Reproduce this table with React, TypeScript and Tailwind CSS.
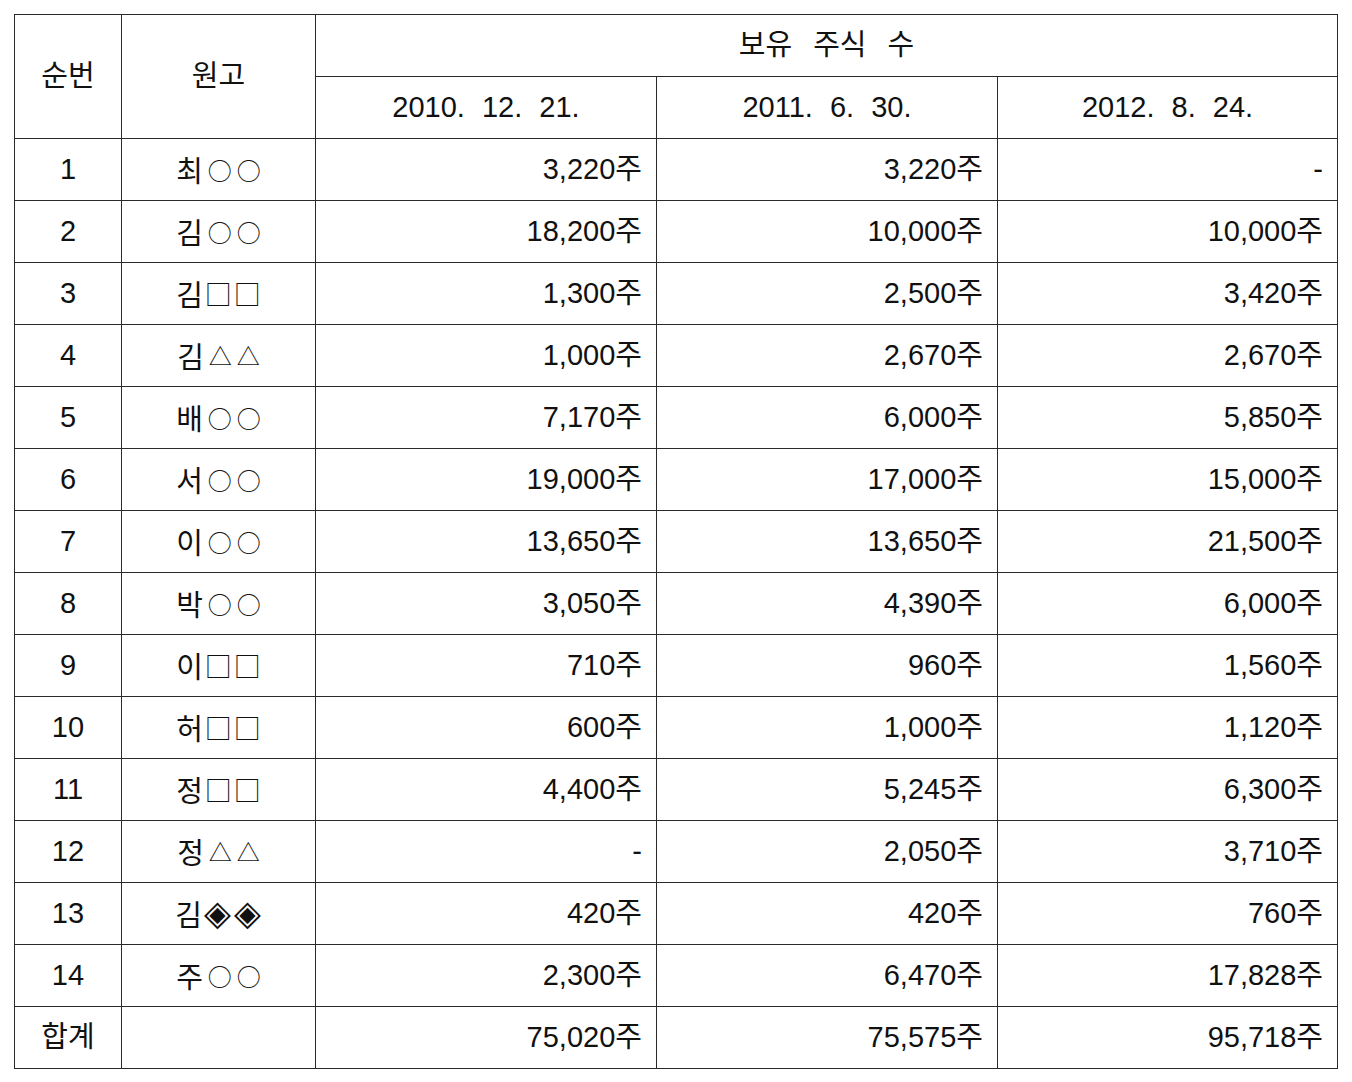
import React from "react";

const rows: [string, string, string, string, string, string][] = [
  ["1", "최", "○○", "3,220주", "3,220주", "-"],
  ["2", "김", "○○", "18,200주", "10,000주", "10,000주"],
  ["3", "김", "□□", "1,300주", "2,500주", "3,420주"],
  ["4", "김", "△△", "1,000주", "2,670주", "2,670주"],
  ["5", "배", "○○", "7,170주", "6,000주", "5,850주"],
  ["6", "서", "○○", "19,000주", "17,000주", "15,000주"],
  ["7", "이", "○○", "13,650주", "13,650주", "21,500주"],
  ["8", "박", "○○", "3,050주", "4,390주", "6,000주"],
  ["9", "이", "□□", "710주", "960주", "1,560주"],
  ["10", "허", "□□", "600주", "1,000주", "1,120주"],
  ["11", "정", "□□", "4,400주", "5,245주", "6,300주"],
  ["12", "정", "△△", "-", "2,050주", "3,710주"],
  ["13", "김", "◈◈", "420주", "420주", "760주"],
  ["14", "주", "○○", "2,300주", "6,470주", "17,828주"],
  ["합계", "", "", "75,020주", "75,575주", "95,718주"],
];

const cell = "border border-[#2a2a2a] h-[62px] p-0 align-middle leading-none";

function Sym({ s }: { s: string }) {
  if (s === "◈") {
    return (
      <span
        className="inline-flex items-center justify-center w-[29px] h-[29px] ml-[1px] text-[35px] leading-none"
        style={{ fontFamily: '"DejaVu Sans", sans-serif' }}
      >
        ◈
      </span>
    );
  }
  if (s === "△") {
    return <span className="inline-block ml-[5px] text-[23px] leading-none">△</span>;
  }
  if (s === "□") {
    return <span className="inline-block ml-[2px] text-[27px] leading-none">□</span>;
  }
  return <span className="inline-block ml-[5px] text-[24px] leading-none">○</span>;
}

export default function App() {
  return (
    <div
      className="bg-white w-[1352px] h-[1082px] pt-[14px] pl-[14px] text-[#111] text-[29px]"
      style={{ fontFamily: '"Liberation Sans", "Noto Sans CJK KR", sans-serif' }}
    >
      <table className="table-fixed border-collapse w-[1323px]">
        <colgroup>
          <col className="w-[107px]" />
          <col className="w-[194px]" />
          <col className="w-[341px]" />
          <col className="w-[341px]" />
          <col className="w-[340px]" />
        </colgroup>
        <tbody>
          <tr>
            <td rowSpan={2} className={cell + " text-center"}>순번</td>
            <td rowSpan={2} className={cell + " text-center"}>원고</td>
            <td colSpan={3} className={cell + " text-center [word-spacing:13px]"}>보유 주식 수</td>
          </tr>
          <tr>
            <td className={cell + " text-center [word-spacing:9px]"}>2010. 12. 21.</td>
            <td className={cell + " text-center [word-spacing:9px]"}>2011. 6. 30.</td>
            <td className={cell + " text-center [word-spacing:9px]"}>2012. 8. 24.</td>
          </tr>
          {rows.map((r) => (
            <tr key={r[0]}>
              <td className={cell + " text-center"}>{r[0]}</td>
              <td
                className={cell + " text-center"}
                style={{ fontFamily: '"Noto Sans CJK KR", sans-serif' }}
              >
                <span className="inline-flex items-center">
                  <span>{r[1]}</span>
                  {Array.from(r[2]).map((s, i) => (
                    <Sym key={i} s={s} />
                  ))}
                </span>
              </td>
              <td className={cell + " text-right pr-[14px]"}>{r[3]}</td>
              <td className={cell + " text-right pr-[14px]"}>{r[4]}</td>
              <td className={cell + " text-right pr-[14px]"}>{r[5]}</td>
            </tr>
          ))}
        </tbody>
      </table>
    </div>
  );
}
